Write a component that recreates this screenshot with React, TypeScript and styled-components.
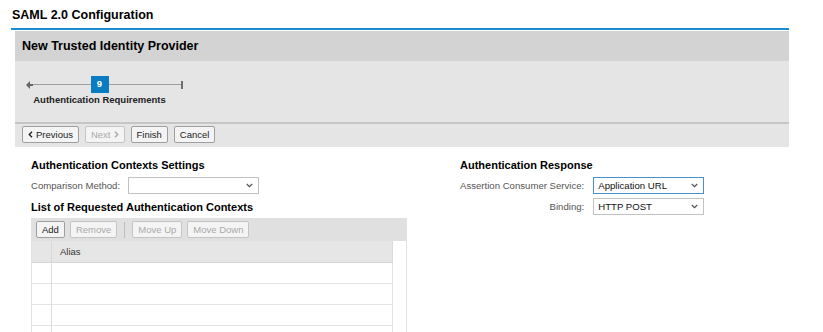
import { FC } from "react";
import styled, { createGlobalStyle } from "styled-components";

const GlobalStyle = createGlobalStyle`
  html, body {
    margin: 0;
    padding: 0;
    background: #ffffff;
    overflow: hidden;
  }
  body {
    font-family: "Liberation Sans", Arial, sans-serif;
    color: #000;
  }
`;

const Page = styled.div`
  width: 778px;
  padding-left: 11px;
`;

const PageTitle = styled.h1`
  margin: 0;
  height: 20px;
  padding: 8px 0 0 1px;
  font-size: 12.5px;
  line-height: 14px;
  font-weight: bold;
  border-bottom: 2px solid #1b8bcf;
`;

const Wizard = styled.div`
  margin: 1px 0 0 4px;
  width: 774px;
  background: #e5e5e5;
`;

const WizardHeader = styled.div`
  height: 30px;
  padding-left: 7px;
  background: #d3d3d3;
  font-size: 12.5px;
  font-weight: bold;
  line-height: 30px;
`;

const Stepper = styled.div`
  height: 46px;
  padding: 15px 0 0 11px;
  display: flex;
  align-items: flex-start;
`;

const StartCap = styled.div`
  width: 7px;
  height: 17px;
  display: flex;
  align-items: center;
`;

const Line = styled.div<{ width?: number }>`
  height: 1px;
  background: #9e9e9e;
  ${({ width }) => (width ? `width: ${width}px;` : "flex: 1;")}
`;

const Tail = styled.div`
  height: 17px;
  display: flex;
  align-items: center;
`;

const EndBar = styled.div`
  width: 2px;
  height: 8px;
  background: #6f6f6f;
`;

const StepColumn = styled.div`
  width: 133px;
  display: flex;
  flex-direction: column;
  align-items: center;
`;

const StepTrack = styled.div`
  width: 100%;
  height: 17px;
  display: flex;
  align-items: center;
`;

const StepBox = styled.div`
  width: 18px;
  height: 17px;
  background: #0a7cc1;
  color: #fff;
  font-size: 9.5px;
  font-weight: bold;
  line-height: 15px;
  text-align: center;
`;

const StepLabel = styled.div`
  margin-top: 1px;
  font-size: 9.5px;
  font-weight: bold;
  line-height: 12px;
  color: #222;
  white-space: nowrap;
`;

const ActionBar = styled.div`
  height: 19px;
  padding: 2px 7px;
  border-top: 2px solid #c6c6c6;
  display: flex;
  gap: 6px;
  align-items: flex-start;
`;

const Button = styled.button<{ disabled?: boolean }>`
  height: 17px;
  padding: 0 5px;
  display: flex;
  align-items: center;
  gap: 3px;
  border: 1px solid ${({ disabled }) => (disabled ? "#c4c4c4" : "#9f9f9f")};
  border-radius: 2px;
  background: #f4f4f4;
  color: ${({ disabled }) => (disabled ? "#a9a9a9" : "#222")};
  font-family: "Liberation Sans", Arial, sans-serif;
  font-size: 9.5px;
  line-height: 15px;
  cursor: default;

  & > svg {
    width: 5px;
    height: 7px;
  }
`;

const Content = styled.div`
  display: flex;
  gap: 53px;
  padding: 11px 0 0 20px;
`;

const LeftColumn = styled.div`
  width: 376px;
  display: flex;
  flex-direction: column;
`;

const RightColumn = styled.div`
  display: flex;
  flex-direction: column;
`;

const SectionTitle = styled.div<{ spacing?: number }>`
  margin-top: ${({ spacing }) => spacing ?? 0}px;
  font-size: 11px;
  font-weight: bold;
  line-height: 14px;
`;

const FieldRow = styled.div`
  margin-top: 5px;
  display: flex;
  align-items: center;
  gap: 8px;
`;

const FieldGrid = styled.div`
  margin-top: 5px;
  display: grid;
  grid-template-columns: auto 111px;
  column-gap: 9px;
  row-gap: 4px;
  align-items: center;
`;

const FieldLabel = styled.label`
  font-size: 9.6px;
  color: #555;
  text-align: right;
  white-space: nowrap;
`;

const SelectBox = styled.div<{ width: number; focused?: boolean }>`
  box-sizing: border-box;
  width: ${({ width }) => width}px;
  height: 17px;
  padding: 0 5px 0 4px;
  display: flex;
  align-items: center;
  justify-content: space-between;
  border: 1px solid ${({ focused }) => (focused ? "#4a90c8" : "#c2c2c2")};
  background: #fff;
  font-size: 9.6px;
  color: #111;

  & > svg {
    width: 7px;
    height: 5px;
    flex: none;
  }
`;

const TableFrame = styled.div`
  margin-top: 4px;
  border-right: 1px solid #e2e2e2;
`;

const TableToolbar = styled.div`
  height: 17px;
  padding: 3px 5px;
  background: #e0e0e0;
  display: flex;
  align-items: center;
  gap: 5px;
`;

const ToolbarSeparator = styled.div`
  width: 1px;
  height: 16px;
  margin: 0 2px;
  background: #bdbdbd;
`;

const Table = styled.div`
  width: 362px;
  display: grid;
  grid-template-columns: 21px 1fr;
`;

const HeaderCell = styled.div`
  height: 21px;
  padding-left: 8px;
  background: #e6e6e6;
  border-bottom: 1px solid #d6d6d6;
  border-right: 1px solid #d9d9d9;
  font-size: 9.5px;
  line-height: 21px;
  color: #333;

  &:first-child {
    padding-left: 0;
    border-left: 1px solid #e2e2e2;
  }
`;

const BodyCell = styled.div<{ selector?: boolean }>`
  height: 20px;
  border-bottom: 1px solid #e3e3e3;
  border-right: 1px solid ${({ selector }) => (selector ? "#dcdcdc" : "#e3e3e3")};
  ${({ selector }) => (selector ? "border-left: 1px solid #e2e2e2;" : "")}
  background: #fff;
`;

const ChevronDown: FC = () => (
  <svg viewBox="0 0 7 5">
    <path d="M0.8 1 L3.5 3.7 L6.2 1" fill="none" stroke="#555" strokeWidth="1.3" />
  </svg>
);

const ChevronLeft: FC<{ color: string }> = ({ color }) => (
  <svg viewBox="0 0 5 7">
    <path d="M4 0.8 L1.3 3.5 L4 6.2" fill="none" stroke={color} strokeWidth="1.4" />
  </svg>
);

const ChevronRight: FC<{ color: string }> = ({ color }) => (
  <svg viewBox="0 0 5 7">
    <path d="M1 0.8 L3.7 3.5 L1 6.2" fill="none" stroke={color} strokeWidth="1.4" />
  </svg>
);

const BackArrow: FC = () => (
  <svg width="7" height="8" viewBox="0 0 7 8">
    <polygon points="0,4 4,0 4,8" fill="#666" />
    <rect x="3" y="3" width="4" height="2" fill="#666" />
  </svg>
);

const rows = [0, 1, 2, 3];

export default function App() {
  return (
    <>
      <GlobalStyle />
      <Page>
        <PageTitle>SAML 2.0 Configuration</PageTitle>
        <Wizard>
          <WizardHeader>New Trusted Identity Provider</WizardHeader>
          <Stepper>
            <StartCap>
              <BackArrow />
            </StartCap>
            <StepColumn>
              <StepTrack>
                <Line />
                <StepBox>9</StepBox>
                <Line />
              </StepTrack>
              <StepLabel>Authentication Requirements</StepLabel>
            </StepColumn>
            <Tail>
              <Line width={15} />
              <EndBar />
            </Tail>
          </Stepper>
          <ActionBar>
            <Button>
              <ChevronLeft color="#222" />
              Previous
            </Button>
            <Button disabled>
              Next
              <ChevronRight color="#a9a9a9" />
            </Button>
            <Button>Finish</Button>
            <Button>Cancel</Button>
          </ActionBar>
        </Wizard>

        <Content>
          <LeftColumn>
            <SectionTitle>Authentication Contexts Settings</SectionTitle>
            <FieldRow>
              <FieldLabel>Comparison Method:</FieldLabel>
              <SelectBox width={131}>
                <span />
                <ChevronDown />
              </SelectBox>
            </FieldRow>
            <SectionTitle spacing={6}>List of Requested Authentication Contexts</SectionTitle>
            <TableFrame>
              <TableToolbar>
                <Button>Add</Button>
                <Button disabled>Remove</Button>
                <ToolbarSeparator />
                <Button disabled>Move Up</Button>
                <Button disabled>Move Down</Button>
              </TableToolbar>
              <Table>
                <HeaderCell />
                <HeaderCell>Alias</HeaderCell>
                {rows.map((row) => [
                  <BodyCell key={`s${row}`} selector />,
                  <BodyCell key={`c${row}`} />,
                ])}
              </Table>
            </TableFrame>
          </LeftColumn>

          <RightColumn>
            <SectionTitle>Authentication Response</SectionTitle>
            <FieldGrid>
              <FieldLabel>Assertion Consumer Service:</FieldLabel>
              <SelectBox width={111} focused>
                <span>Application URL</span>
                <ChevronDown />
              </SelectBox>
              <FieldLabel>Binding:</FieldLabel>
              <SelectBox width={111}>
                <span>HTTP POST</span>
                <ChevronDown />
              </SelectBox>
            </FieldGrid>
          </RightColumn>
        </Content>
      </Page>
    </>
  );
}
